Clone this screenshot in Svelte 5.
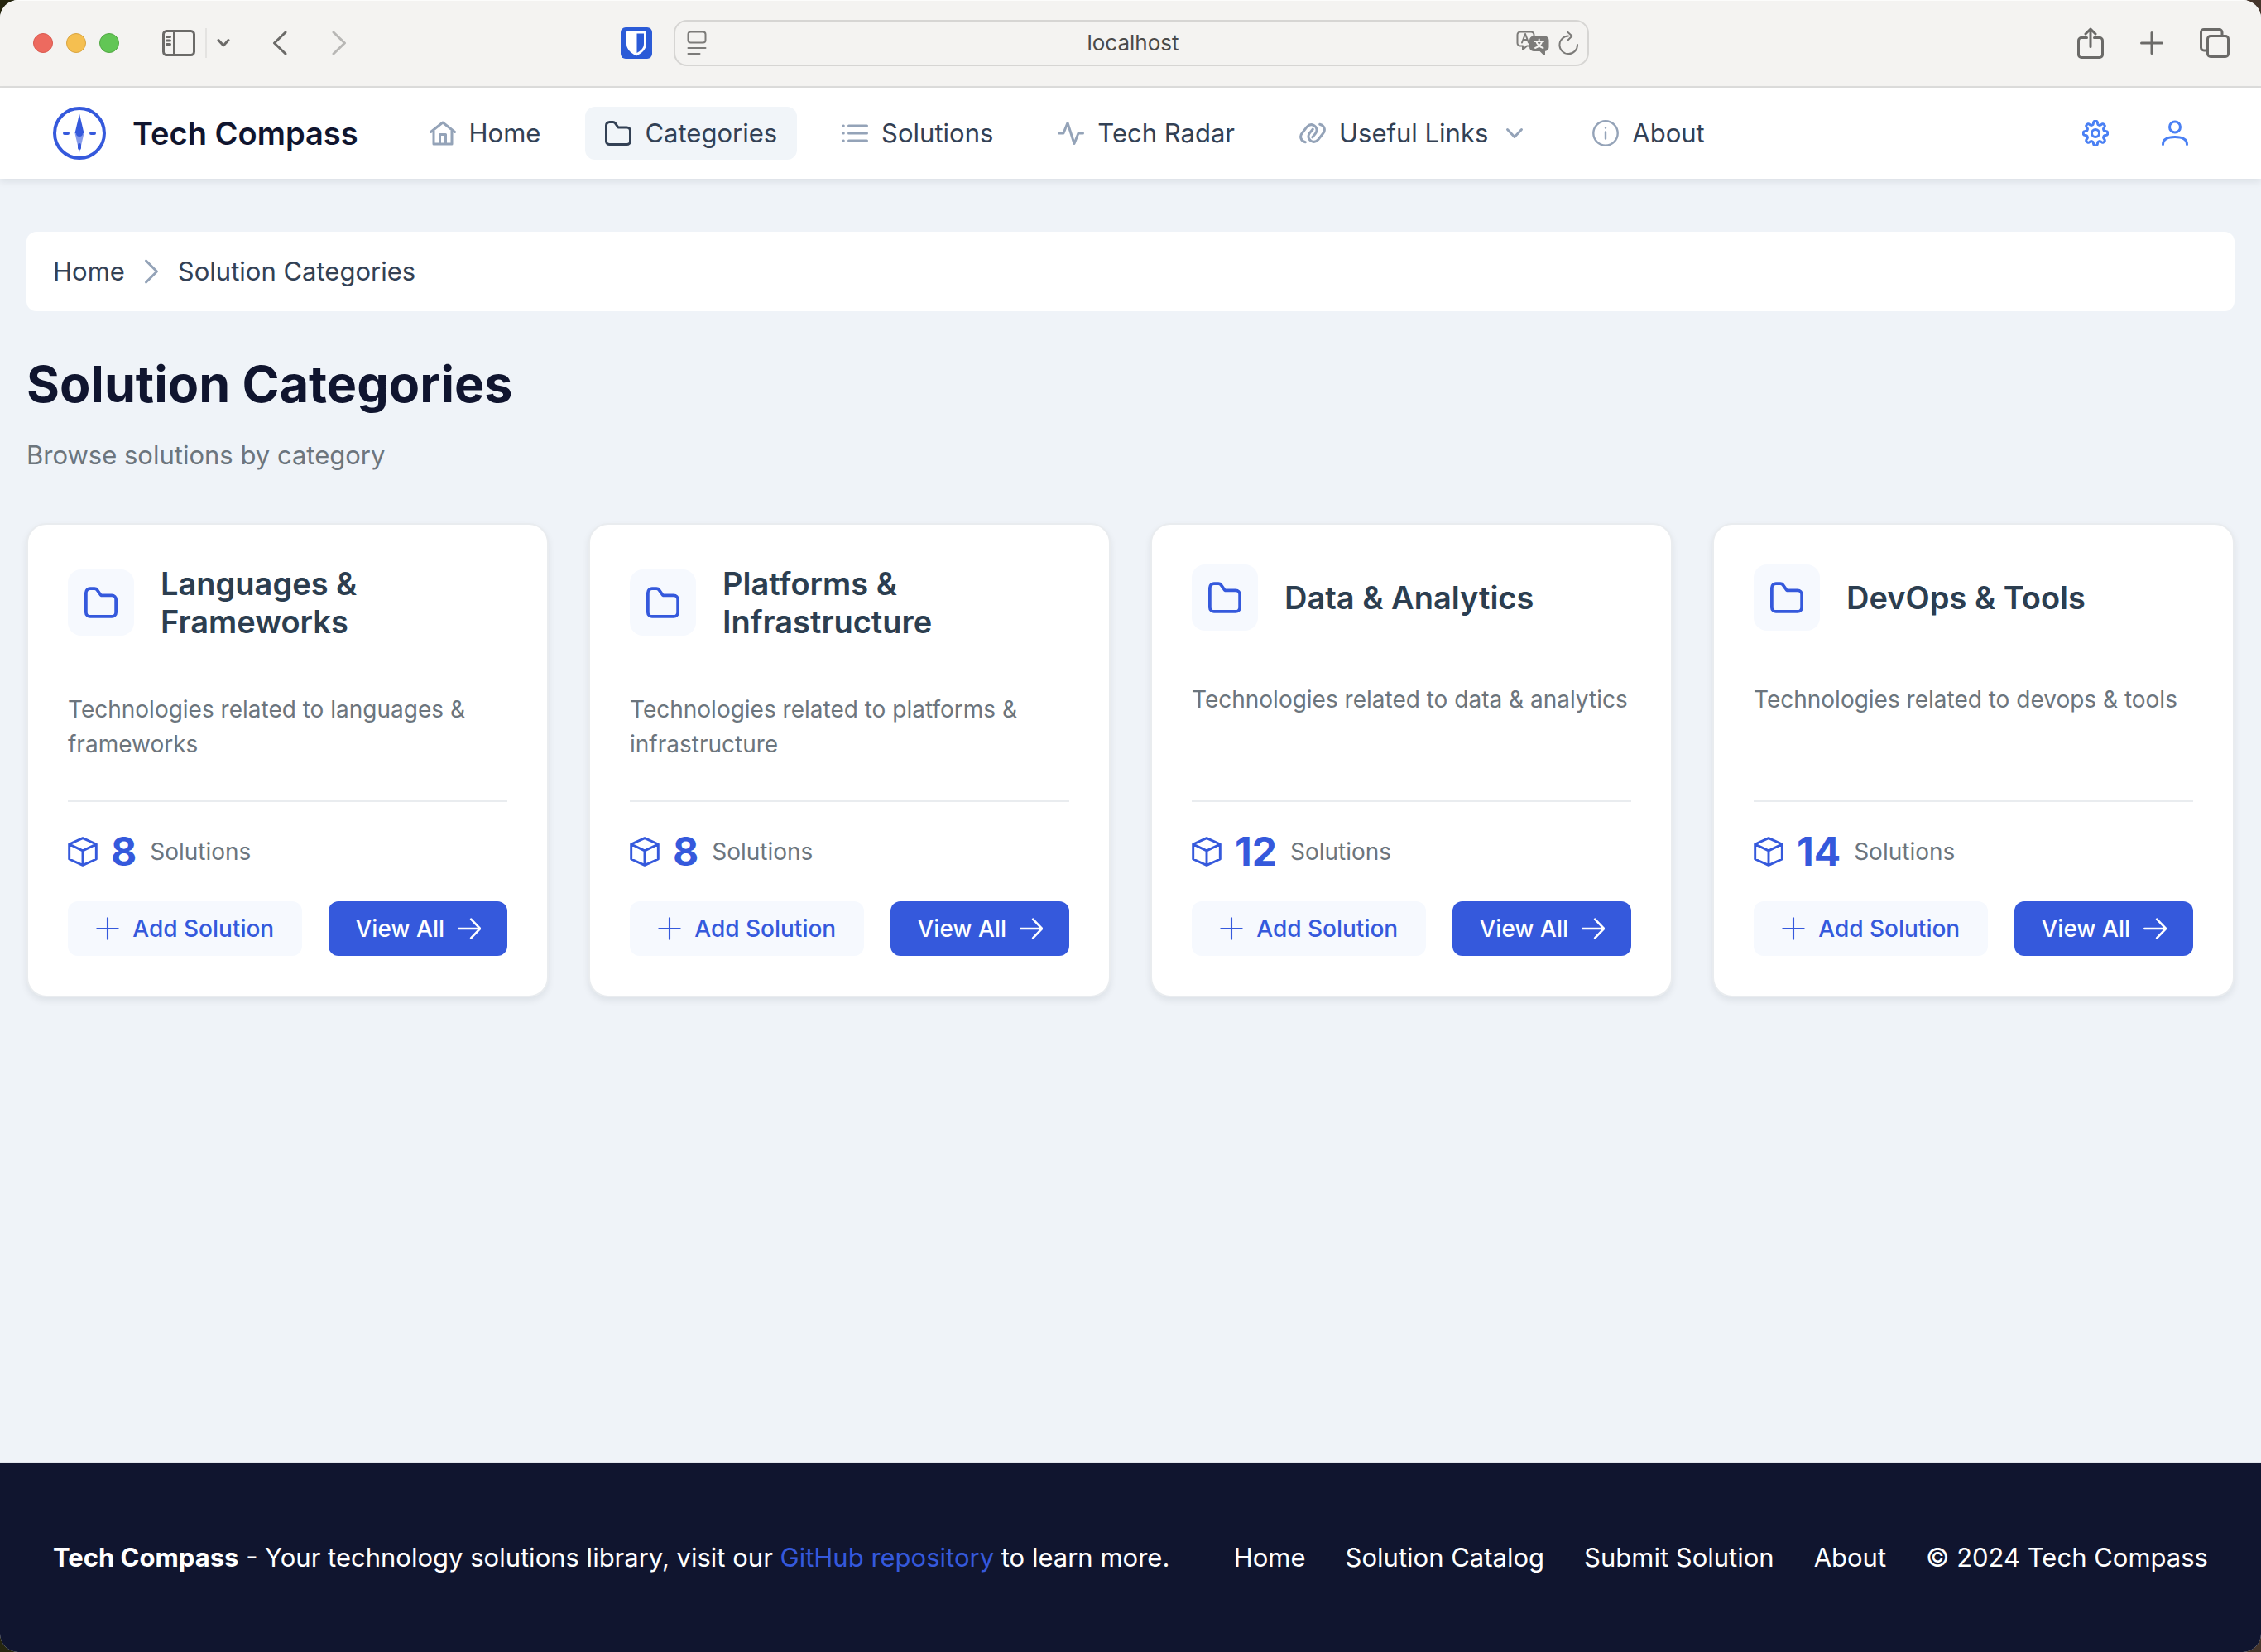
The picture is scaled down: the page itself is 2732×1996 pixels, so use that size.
<script>
  const nav = [
    { label: 'Home', icon: 'home' },
    { label: 'Categories', icon: 'folder', active: true },
    { label: 'Solutions', icon: 'list' },
    { label: 'Tech Radar', icon: 'pulse' },
    { label: 'Useful Links', icon: 'link', menu: true },
    { label: 'About', icon: 'info' },
  ];

  const categories = [
    { name: 'Languages & Frameworks', topic: 'languages & frameworks', count: 8 },
    { name: 'Platforms & Infrastructure', topic: 'platforms & infrastructure', count: 8 },
    { name: 'Data & Analytics', topic: 'data & analytics', count: 12 },
    { name: 'DevOps & Tools', topic: 'devops & tools', count: 14 },
  ];

  const footerLinks = ['Home', 'Solution Catalog', 'Submit Solution', 'About'];

  // Outline of an eight-lobed gear centred on (16, 16).
  const gear = (() => {
    const points = [];
    for (let i = 0; i <= 160; i++) {
      const a = (i / 160) * Math.PI * 2;
      const r = 12.7 + 2.1 * Math.tanh(2 * Math.cos(8 * a));
      points.push(`${(16 + r * Math.sin(a)).toFixed(2)} ${(16 - r * Math.cos(a)).toFixed(2)}`);
    }
    return `M${points.join('L')}Z`;
  })();
</script>

{#snippet icon(name)}
  <svg class="icon {name}" viewBox="0 0 32 32" aria-hidden="true">
    {#if name === 'home'}
      <path d="M1.500 14.500 16 3l14.500 11.500M5 12v17h22V12M12.500 29V17.500h7V29" />
    {:else if name === 'folder'}
      <path d="M1.500 6.500a4 4 0 0 1 4-4h4.300a3 3 0 0 1 2.400 1.200L16 9h10.500a4 4 0 0 1 4 4v12.500a4 4 0 0 1-4 4h-21a4 4 0 0 1-4-4z" />
    {:else if name === 'list'}
      <path d="M8.500 7h22M8.500 16h22M8.500 25h22M2 7h.3M2 16h.3M2 25h.3" />
    {:else if name === 'pulse'}
      <path d="M1.500 16H7l5-12.500L20 28.500 25 16h5.500" />
    {:else if name === 'link'}
      <path d="M7.300 26.700C1.500 25.500.2 19.500 3.200 16L9.300 8.200C14.500 2.500 23.500 8 20.300 15c-.5 1.200-2.800 3.800-4.500 5.800" />
      <path d="M24.700 5.300C30.500 6.500 31.800 12.500 28.800 16l-6.100 7.800C17.500 29.500 8.500 24 11.700 17c.5-1.200 2.800-3.800 4.500-5.800" />
    {:else if name === 'info'}
      <circle cx="16" cy="16" r="14.700" /><path d="M16 14.500v8M16 9.200v.3" />
    {:else if name === 'down'}
      <path d="m7.500 11.500 8.500 9 8.500-9" />
    {:else if name === 'right'}
      <path d="m9.500 3 13 13-13 13" />
    {:else if name === 'gear'}
      <path d={gear} /><circle cx="16" cy="16" r="4.500" />
    {:else if name === 'user'}
      <circle cx="16" cy="8.500" r="6.500" /><path d="M1.500 29.500C1.500 22 8 20.500 16 20.500s14.500 1.500 14.500 9" />
    {:else if name === 'box'}
      <path d="M16 1.500 30.500 8v16L16 30.500 1.500 24V8zM1.500 8 16 15l14.500-7M16 15v15.500" />
    {:else if name === 'plus'}
      <path d="M16 1.500v29M1.500 16h29" />
    {:else if name === 'arrow'}
      <path d="M1.500 16h29M18.500 3l12.500 13-12.500 13" />
    {/if}
  </svg>
{/snippet}

<div class="window">
  <div class="toolbar">
    <div class="side start">
      <div class="lights"><i class="red"></i><i class="yellow"></i><i class="green"></i></div>
      <button class="tool sidebar" aria-label="Show sidebar">
        <svg width="40" height="32" viewBox="0 0 40 32"><rect x="1.500" y="1.500" width="37" height="29" rx="4" /><path d="M14.500 2v28M5.500 8.500h4M5.500 13h4M5.500 17.500h4" /></svg>
      </button>
      <span class="rule"></span>
      <button class="tool menu" aria-label="Tab groups">
        <svg width="16" height="12" viewBox="0 0 16 12"><path d="m2 2.500 6 6.500 6-6.500" /></svg>
      </button>
      <button class="tool back" aria-label="Back">
        <svg width="18" height="30" viewBox="0 0 18 30"><path d="M16 2 2.500 15 16 28" /></svg>
      </button>
      <button class="tool forward" aria-label="Forward" disabled>
        <svg width="18" height="30" viewBox="0 0 18 30"><path d="M2 2l13.500 13L2 28" /></svg>
      </button>
      <button class="tool shield" aria-label="Password manager">
        <svg width="38" height="38" viewBox="0 0 38 38"><rect class="plate" width="38" height="38" rx="6" /><path class="body" d="M7 5.500Q7 4 8.500 4h21Q31 4 31 5.500V20c0 7-6 11.500-12 14.500C13 31.500 7 27 7 20z" /><path class="half" d="M19.500 7.500H28V20c0 5-4 8.500-8.500 11z" /></svg>
      </button>
    </div>

    <div class="address">
      <svg width="24" height="30" viewBox="0 0 24 30"><rect x="1.500" y="1.500" width="21" height="13" rx="3" /><path d="M1.500 21h21M1.500 28h14" /></svg>
      <span class="host">localhost</span>
      <span class="page-tools">
        <svg class="translate" width="40" height="30" viewBox="0 0 40 30"><path d="M16 18.500h-3L8 23v-4.500H5A3.500 3.500 0 0 1 1.500 15V5A3.500 3.500 0 0 1 5 1.500h13A3.500 3.500 0 0 1 21.500 5v2" /><path d="m7 14.500 4-10.500 4 10.500M8.500 11h5" /><path class="solid" d="M21 7.500h13.500a4 4 0 0 1 4 4V20a4 4 0 0 1-4 4H34v5l-5-5h-8a4 4 0 0 1-4-4v-8.500a4 4 0 0 1 4-4z" /><path class="ink" d="M22.500 13h10.500M27.700 10.500V13M31 13.500c-1 3.500-4 6-8 7.500M24.500 13.500c1 3.500 4 6 8 7.500" /></svg>
        <svg width="26" height="30" viewBox="0 0 26 30"><path d="M13 6.500A10.800 10.800 0 1 0 24 17M12 1.500l5.500 5-5.500 5.500" /></svg>
      </span>
    </div>

    <div class="side end">
      <button class="tool" aria-label="Share">
        <svg width="32" height="38" viewBox="0 0 32 38"><path d="M11.500 12.500H5A3.500 3.500 0 0 0 1.500 16v17A3.500 3.500 0 0 0 5 36.500h22a3.500 3.500 0 0 0 3.500-3.500V16a3.500 3.500 0 0 0-3.500-3.500h-6.500M16 23.500V2M10 8l6-6 6 6" /></svg>
      </button>
      <button class="tool" aria-label="New tab">
        <svg width="28" height="28" viewBox="0 0 28 28"><path d="M14 1.500v25M1.500 14h25" /></svg>
      </button>
      <button class="tool" aria-label="Show tabs">
        <svg width="36" height="36" viewBox="0 0 36 36"><path d="M9 27H5a3.500 3.500 0 0 1-3.500-3.500V5A3.500 3.500 0 0 1 5 1.500h18.500A3.500 3.500 0 0 1 27 5v4" /><rect x="9.500" y="9.500" width="25" height="25" rx="3.500" /></svg>
      </button>
    </div>
  </div>

  <header>
    <a class="brand" href="#home">
      <svg width="64" height="64" viewBox="0 0 64 64" aria-hidden="true">
        <circle class="ring" cx="32" cy="32" r="30" />
        <path class="tick" d="M14 32h4M46 32h4M32 46v4" />
        <path class="north" d="M32 8.500 37.500 32h-11z" />
        <path class="south" d="M32 55.500 37.500 32h-11z" />
        <circle class="north" cx="32" cy="32" r="4" />
      </svg>
      <span>Tech Compass</span>
    </a>
    <nav>
      {#each nav as item}
        {#if item.menu}
          <button class="nav-item">{@render icon(item.icon)}{item.label}{@render icon('down')}</button>
        {:else}
          <a class="nav-item" class:active={item.active} href="#{item.icon}">{@render icon(item.icon)}{item.label}</a>
        {/if}
      {/each}
    </nav>
    <div class="account">
      <button aria-label="Settings">{@render icon('gear')}</button>
      <button aria-label="Account">{@render icon('user')}</button>
    </div>
  </header>

  <main>
    <nav class="crumbs" aria-label="Breadcrumb">
      <a href="#home">Home</a>{@render icon('right')}<span>Solution Categories</span>
    </nav>
    <h1>Solution Categories</h1>
    <p class="lead">Browse solutions by category</p>

    <section class="grid">
      {#each categories as category}
        <article>
          <div class="head">
            <span class="tile">{@render icon('folder')}</span>
            <h2>{category.name}</h2>
          </div>
          <p class="about">Technologies related to {category.topic}</p>
          <div class="stats">
            {@render icon('box')}<strong>{category.count}</strong><span>Solutions</span>
          </div>
          <div class="actions">
            <button class="add">{@render icon('plus')}Add Solution</button>
            <button class="view">View All{@render icon('arrow')}</button>
          </div>
        </article>
      {/each}
    </section>
  </main>

  <footer>
    <p><strong>Tech Compass</strong> - Your technology solutions library, visit our <a class="repo" href="#repository">GitHub repository</a> to learn more.</p>
    <div class="links">
      {#each footerLinks as link}
        <a href="#footer">{link}</a>
      {/each}
      <span>© 2024 Tech Compass</span>
    </div>
  </footer>
</div>

<style>
  :global(body) {
    background: linear-gradient(90deg, #26260f, #45352b);
  }

  .window {
    box-sizing: border-box;
    min-height: 100vh;
    display: flex;
    flex-direction: column;
    overflow: hidden;
    border-radius: 22px;
    background: #eff3f8;
    color: #334155;
    font-family: Inter, 'Liberation Sans', sans-serif;
    font-size: 31px;
    line-height: 48px;
  }

  h1, h2, p { margin: 0; }
  a { color: inherit; text-decoration: none; }
  button {
    padding: 0;
    border: 0;
    background: none;
    color: inherit;
    font: inherit;
    cursor: pointer;
  }
  svg {
    flex: none;
    fill: none;
    stroke: currentColor;
    stroke-width: 3;
    stroke-linecap: round;
    stroke-linejoin: round;
  }
  .icon { width: 32px; height: 32px; }
  .info, .plus { stroke-width: 2.4; }
  .box { stroke-width: 2.6; }

  /* Browser toolbar */
  .toolbar {
    box-sizing: border-box;
    height: 106px;
    display: flex;
    align-items: center;
    padding: 0 38px 2px 40px;
    border-top: 1px solid #fcfcfb;
    border-bottom: 2px solid #dcdcdb;
    background: #f4f3f1;
    color: #6b6a68;
  }
  .side { flex: 1; display: flex; align-items: center; }
  .tool { display: flex; }
  .lights { display: flex; gap: 16px; margin-right: 52px; }
  .lights i {
    box-sizing: border-box;
    width: 24px;
    height: 24px;
    border: 1px solid #d9584e;
    border-radius: 50%;
    background: #ed6a5f;
  }
  .lights .yellow { background: #f5bf50; border-color: #d9a43f; }
  .lights .green { background: #62c655; border-color: #52a844; }
  .rule { width: 2px; height: 36px; margin: 0 12px; background: #e4e3e1; }
  .back { margin-left: 51px; }
  .forward { margin-left: 54px; color: #b8b7b5; }
  .shield { margin: 0 26px 0 auto; }
  .shield svg { stroke: none; }
  .plate, .half { fill: #2b5bd7; }
  .body { fill: #fff; }

  .address {
    box-sizing: border-box;
    width: 1106px;
    height: 56px;
    display: grid;
    grid-template-columns: 1fr auto 1fr;
    align-items: center;
    padding: 0 10px 0 14px;
    border: 2px solid #d6d5d3;
    border-radius: 16px;
    color: #7c7b79;
    font-size: 26px;
    line-height: 32px;
  }
  .address svg { stroke-width: 2; }
  .host { color: #4b4a49; }
  .page-tools { display: flex; justify-content: flex-end; gap: 10px; }
  .solid { fill: #7c7b79; }
  .ink { stroke: #f4f3f1; }
  .end { justify-content: flex-end; gap: 44px; }

  /* Site header */
  header {
    position: relative;
    display: flex;
    align-items: center;
    height: 110px;
    padding: 0 64px;
    background: #fff;
    box-shadow: 0 4px 8px rgba(15, 23, 42, 0.08);
  }
  .brand {
    display: flex;
    align-items: center;
    gap: 32px;
    margin-right: 62px;
    color: #10152f;
    font-size: 38px;
    font-weight: 600;
  }
  .brand svg { stroke: #3559dc; stroke-width: 4; }
  .brand .north { fill: #3559dc; stroke: none; }
  .brand .south { fill: #3559dc; fill-opacity: 0.6; stroke: none; }
  header nav { display: flex; gap: 30px; }
  .nav-item {
    display: flex;
    align-items: center;
    gap: 16px;
    height: 64px;
    padding: 0 24px;
    border-radius: 12px;
  }
  .nav-item .icon { color: #94a3b8; }
  .nav-item.active { background: #f1f5f9; }
  .nav-item.active .icon { color: #334155; }
  .account { display: flex; gap: 16px; margin-left: auto; color: #4a80f4; }
  .account button {
    display: flex;
    align-items: center;
    justify-content: center;
    width: 80px;
    height: 80px;
  }

  /* Page */
  main { flex: 1; padding: 64px 32px; }
  .crumbs {
    display: flex;
    align-items: center;
    gap: 16px;
    height: 96px;
    padding: 0 32px;
    border-radius: 12px;
    background: #fff;
  }
  .crumbs .icon { color: #94a3b8; }
  h1 {
    margin-top: 48px;
    color: #10152f;
    font-size: 61px;
    font-weight: 700;
    line-height: 80px;
  }
  .lead { margin-top: 22px; color: #6c757d; }

  .grid {
    display: grid;
    grid-template-columns: repeat(4, 1fr);
    gap: 48px;
    margin-top: 58px;
  }
  article {
    box-sizing: border-box;
    display: flex;
    flex-direction: column;
    min-height: 573px;
    padding: 48px;
    border: 2px solid #e9ecef;
    border-radius: 24px;
    background: #fff;
    box-shadow: 0 4px 8px rgba(15, 23, 42, 0.08);
    color: #6c757d;
    font-size: 28px;
    line-height: 42px;
  }
  .head { display: flex; align-items: center; gap: 32px; margin-bottom: 62px; }
  .tile {
    flex: none;
    display: flex;
    align-items: center;
    justify-content: center;
    width: 80px;
    height: 80px;
    border-radius: 16px;
    background: #f6f9fe;
    color: #3559dc;
  }
  .tile .icon { width: 40px; height: 40px; }
  h2 { color: #2c3e50; font-size: 38px; font-weight: 600; line-height: 46px; }
  .about { margin-bottom: auto; }
  .stats {
    display: flex;
    align-items: center;
    gap: 16px;
    margin-bottom: 30px;
    padding-top: 30px;
    border-top: 2px solid #e9ecef;
    line-height: 60px;
  }
  .stats .icon { width: 36px; height: 36px; color: #3559dc; }
  .stats strong { color: #3559dc; font-size: 48px; font-weight: 700; }
  .actions { display: flex; gap: 32px; }
  .actions button {
    display: flex;
    align-items: center;
    justify-content: center;
    gap: 16px;
    height: 66px;
    padding: 0 32px;
    border-radius: 12px;
    font-weight: 500;
    white-space: nowrap;
  }
  .actions .icon { width: 28px; height: 28px; }
  .actions .add { flex: 1; padding: 0; background: #f6f9fe; color: #3559dc; }
  .actions .view { background: #3559dc; color: #fff; }

  footer {
    display: flex;
    align-items: center;
    justify-content: space-between;
    height: 228px;
    padding: 0 64px;
    border-top: 2px solid #e2e6ec;
    background: #10152f;
    color: #fff;
  }
  footer strong { font-weight: 700; }
  .repo { color: #3559dc; }
  .links { display: flex; gap: 48px; }
</style>
